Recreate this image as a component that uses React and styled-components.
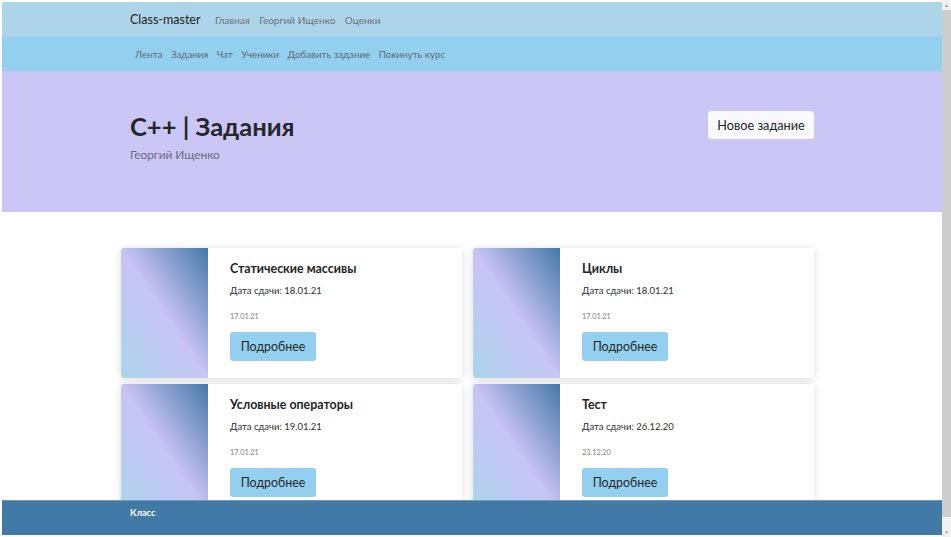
import React from "react";
import styled, {createGlobalStyle} from "styled-components";

const GlobalStyle = createGlobalStyle`
  html, body {
    margin: 0;
    padding: 0;
    background: #ffffff;
    overflow: hidden;
  }

  body {
    font-family: Lato, "Open Sans", Arial, sans-serif;
    color: #212529;
  }
`;

const tasks = [
    {title: "Статические массивы", due: "18.01.21", created: "17.01.21"},
    {title: "Циклы", due: "18.01.21", created: "17.01.21"},
    {title: "Условные операторы", due: "19.01.21", created: "17.01.21"},
    {title: "Тест", due: "26.12.20", created: "23.12.20"},
];

const App = () => {
    return (
        <>
            <GlobalStyle/>
            <Frame>
                <Page>
                    <TopNav>
                        <Container>
                            <NavInner>
                                <Brand>Class-master</Brand>
                                <NavLink>Главная</NavLink>
                                <NavLink>Георгий Ищенко</NavLink>
                                <NavLink>Оценки</NavLink>
                            </NavInner>
                        </Container>
                    </TopNav>
                    <SubNav>
                        <Container>
                            <SubInner>
                                <SubLink>Лента</SubLink>
                                <SubLink>Задания</SubLink>
                                <SubLink>Чат</SubLink>
                                <SubLink>Ученики</SubLink>
                                <SubLink>Добавить задание</SubLink>
                                <SubLink>Покинуть курс</SubLink>
                            </SubInner>
                        </Container>
                    </SubNav>
                    <Hero>
                        <Container>
                            <HeroInner>
                                <div>
                                    <Title>C++ | Задания</Title>
                                    <Teacher>Георгий Ищенко</Teacher>
                                </div>
                                <LightButton>Новое задание</LightButton>
                            </HeroInner>
                        </Container>
                    </Hero>
                    <Main>
                        <Container>
                            <Grid>
                                {tasks.map((t) => (
                                    <Card key={t.title}>
                                        <Cover/>
                                        <CardBody>
                                            <CardTitle>{t.title}</CardTitle>
                                            <Due>Дата сдачи: {t.due}</Due>
                                            <Created>{t.created}</Created>
                                            <MoreButton>Подробнее</MoreButton>
                                        </CardBody>
                                    </Card>
                                ))}
                            </Grid>
                        </Container>
                    </Main>
                    <Footer>
                        <Container>
                            <FooterText>Класс</FooterText>
                        </Container>
                    </Footer>
                </Page>
                <Scrollbar>
                    <Arrow>▲</Arrow>
                    <Thumb/>
                    <Arrow>▼</Arrow>
                </Scrollbar>
            </Frame>
        </>
    );
}

const Frame = styled.div`
  display: flex;
  height: 537px;
  width: 951px;
  box-sizing: border-box;
  padding: 2px 0 2px 2px;
  background: #ffffff;
`;

const Page = styled.div`
  position: relative;
  width: 940px;
  height: 533px;
  overflow: hidden;
  background: #ffffff;
`;

const Container = styled.div`
  margin-left: 119px;
  width: 693px;
`;

const TopNav = styled.nav`
  height: 35px;
  background: #aed4ea;
  display: flex;
  align-items: center;
`;

const NavInner = styled.div`
  display: flex;
  align-items: center;
  padding-left: 9px;
  gap: 9.5px;
`;

const Brand = styled.span`
  font-size: 12.5px;
  color: #222;
  margin-right: 5px;
`;

const NavLink = styled.span`
  font-size: 10px;
  color: #6b7177;
`;

const SubNav = styled.nav`
  height: 34px;
  background: #93d0ef;
  display: flex;
  align-items: center;
`;

const SubInner = styled.div`
  display: flex;
  align-items: center;
  padding-left: 14px;
  gap: 8.5px;
`;

const SubLink = styled.span`
  font-size: 9.8px;
  color: #5f6a72;
`;

const Hero = styled.section`
  height: 141px;
  background: #cac6f5;
`;

const HeroInner = styled.div`
  display: flex;
  justify-content: space-between;
  align-items: flex-start;
  padding: 40px 0 0 9px;
`;

const Title = styled.h1`
  margin: 0;
  font-size: 25.5px;
  font-weight: 700;
  line-height: 31px;
  color: #25272b;
`;

const Teacher = styled.div`
  margin-top: 5px;
  font-size: 11.8px;
  color: #6c6a7e;
`;

const LightButton = styled.button`
  height: 28px;
  width: 106px;
  border: none;
  border-radius: 3px;
  background: #f8f9fa;
  color: #212529;
  font-family: inherit;
  font-size: 12.7px;
  padding: 0;
`;

const Main = styled.main`
  padding-top: 36px;
`;

const Grid = styled.div`
  display: grid;
  grid-template-columns: 341px 341px;
  column-gap: 11px;
  row-gap: 6px;
`;

const Card = styled.div`
  display: flex;
  height: 130px;
  background: #ffffff;
  border-radius: 3px;
  overflow: hidden;
  box-shadow: 0 1px 8px rgba(0, 0, 0, 0.14);
`;

const Cover = styled.div`
  width: 87px;
  flex-shrink: 0;
  background: linear-gradient(to top right, #acd5ec 0%, #c8c4f4 50%, #4579a8 100%);
`;

const CardBody = styled.div`
  display: flex;
  flex-direction: column;
  align-items: flex-start;
  padding: 13px 0 0 22px;
`;

const CardTitle = styled.div`
  font-size: 12.4px;
  font-weight: 700;
  color: #1f2326;
  line-height: 16px;
`;

const Due = styled.div`
  margin-top: 7px;
  font-size: 9.5px;
  color: #2b2f33;
  line-height: 14px;
`;

const Created = styled.div`
  margin-top: 14px;
  font-size: 7.3px;
  color: #7a7f85;
  line-height: 10px;
`;

const MoreButton = styled.button`
  margin-top: 10px;
  height: 29px;
  width: 86px;
  border: none;
  border-radius: 3px;
  background: #93d0ef;
  color: #22272b;
  font-family: inherit;
  font-size: 12.4px;
  padding: 0;
`;

const Footer = styled.footer`
  position: absolute;
  left: 0;
  right: 0;
  bottom: 0;
  height: 35px;
  background: #427aa7;
  border-top: 1px solid #6f9ac0;
  box-sizing: border-box;
  padding-top: 6px;
`;

const FooterText = styled.span`
  display: block;
  padding-left: 9px;
  font-size: 9.2px;
  font-weight: 700;
  color: #ffffff;
`;

const Scrollbar = styled.div`
  width: 9px;
  height: 537px;
  margin-top: -2px;
  display: flex;
  flex-direction: column;
  background: #f1f1f1;
`;

const Arrow = styled.div`
  height: 10px;
  font-size: 5px;
  line-height: 10px;
  text-align: center;
  color: #a3a3a3;
`;

const Thumb = styled.div`
  flex: 1;
  margin: 0 0 10px 0;
  background: #cdcdcd;
`;

export default App;
